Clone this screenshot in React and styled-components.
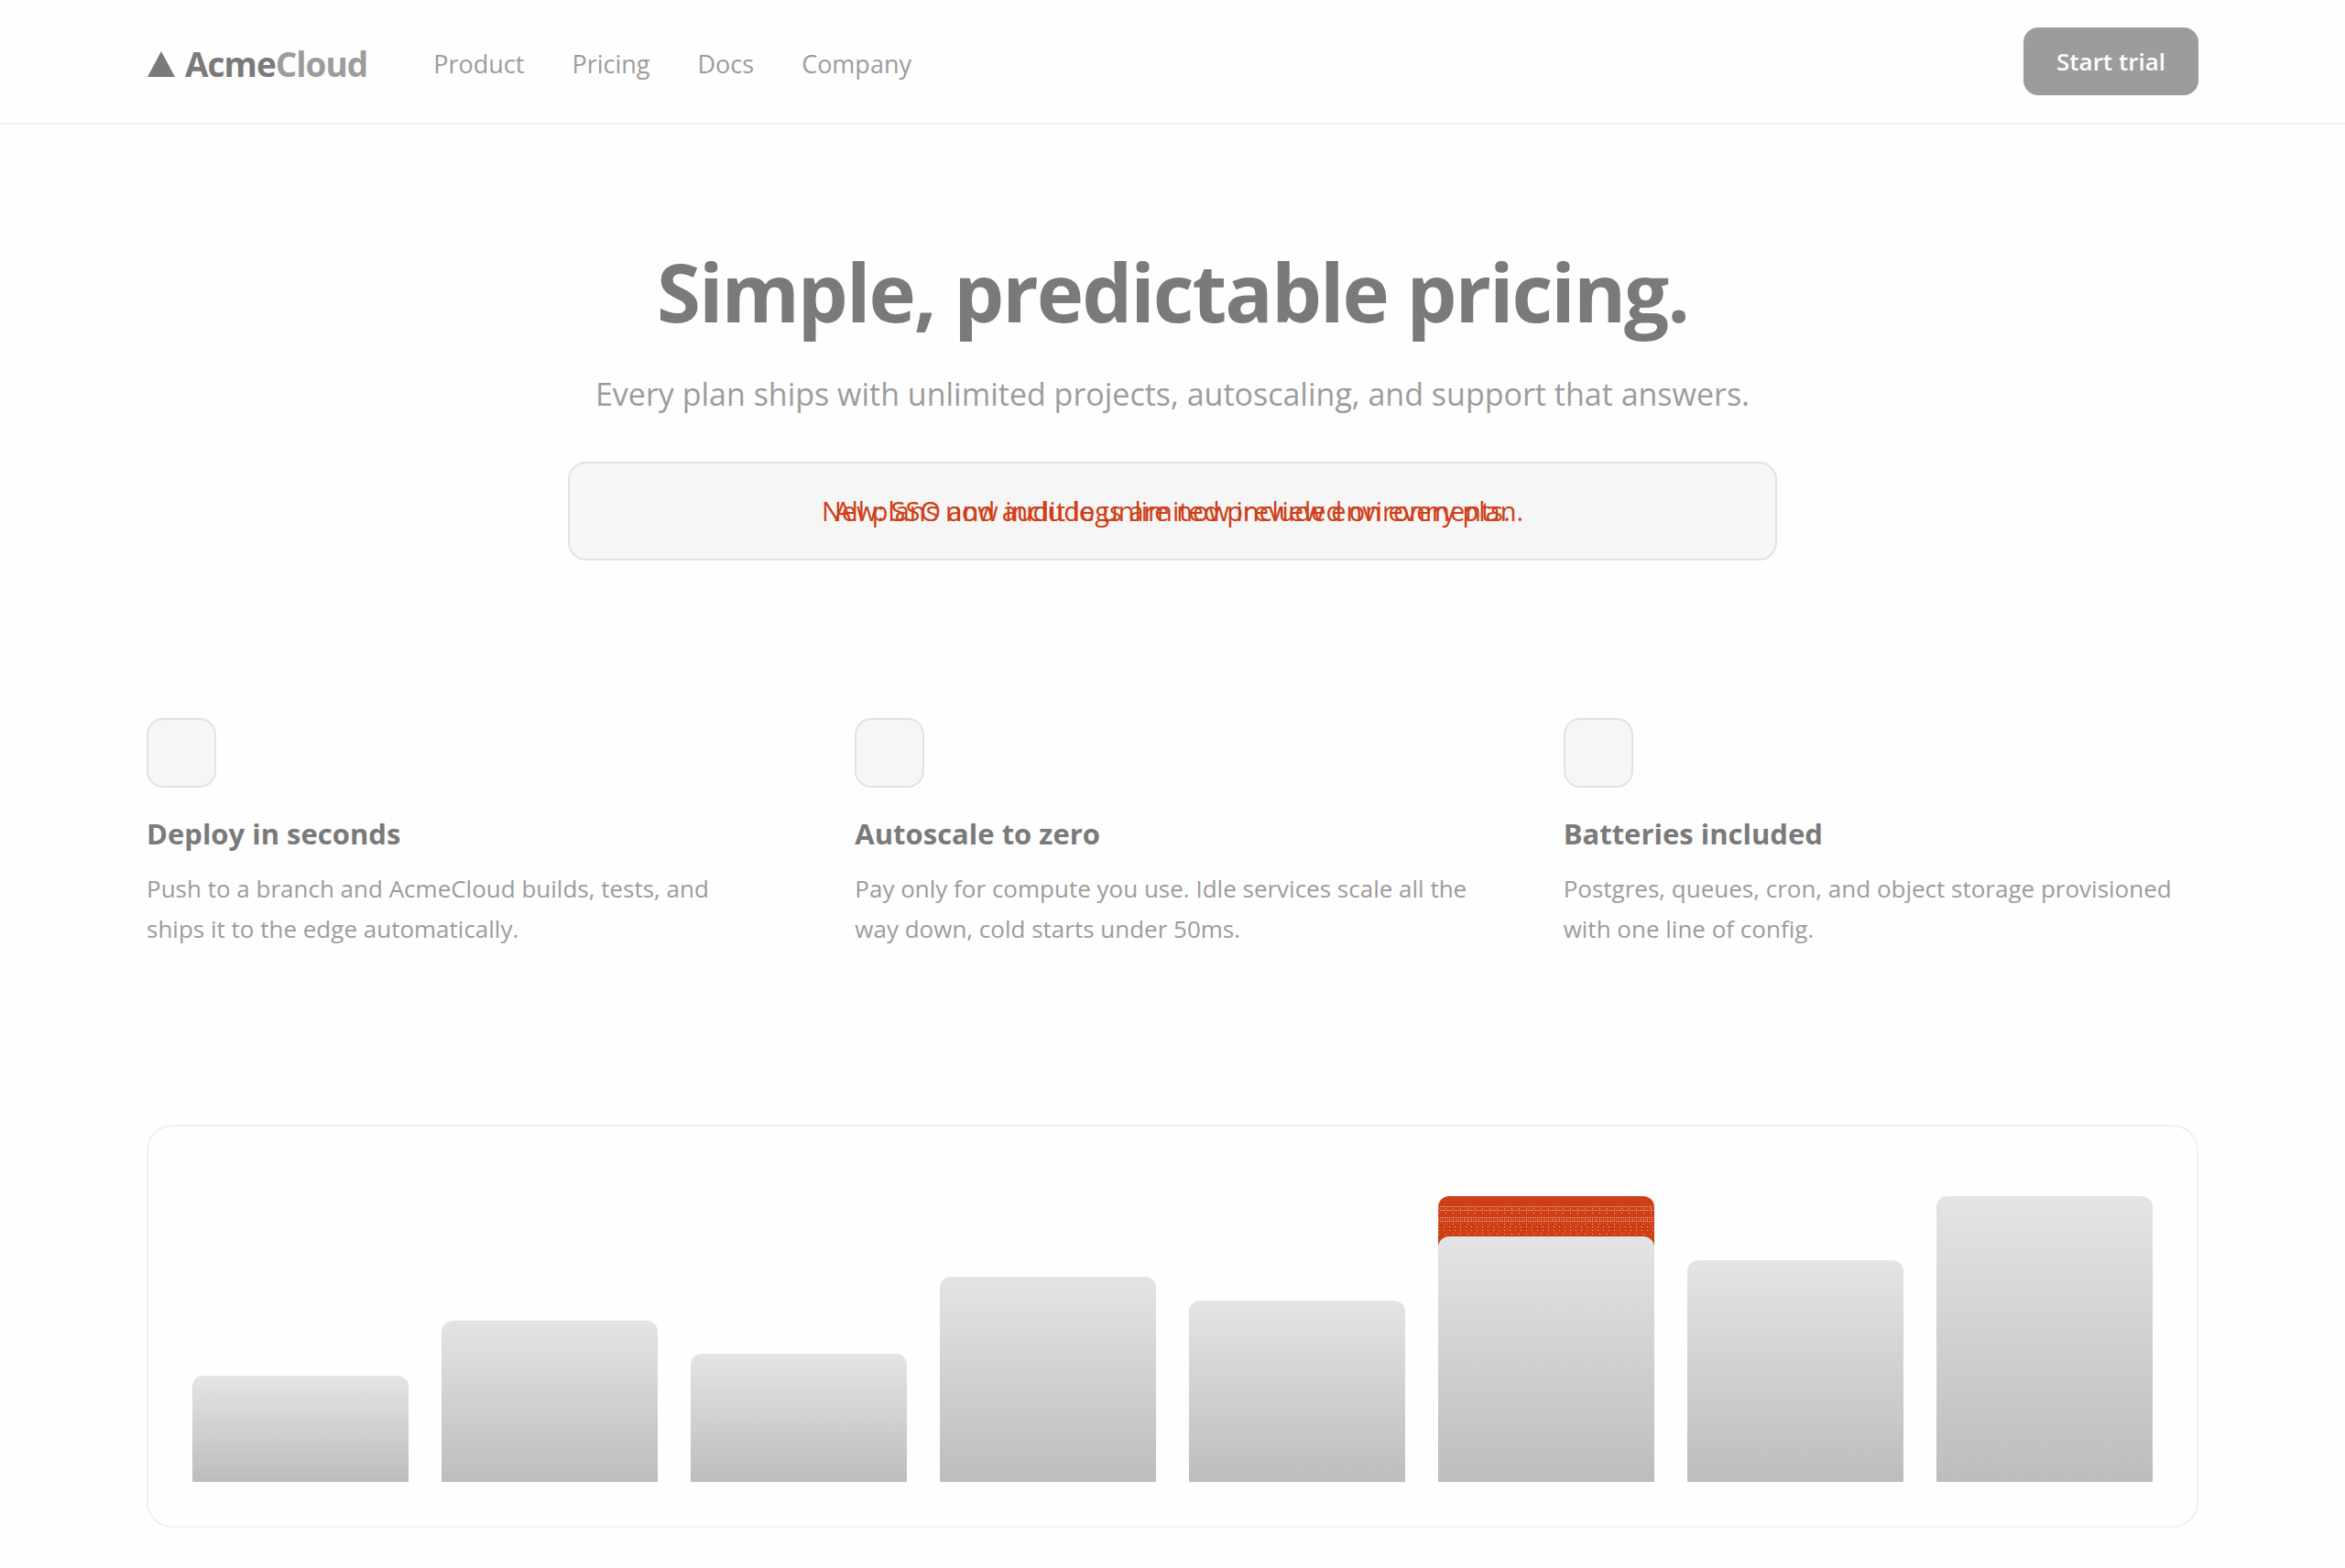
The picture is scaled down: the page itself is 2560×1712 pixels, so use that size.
import React from 'react';
import styled, { createGlobalStyle } from 'styled-components';

const GlobalStyle = createGlobalStyle`
  * {
    box-sizing: border-box;
  }

  body {
    margin: 0;
    background: #fefefe;
    color: #9c9c9c;
    font-family: 'Open Sans', 'Noto Sans', sans-serif;
    font-size: 27px;
  }
`;

const Header = styled.header`
  display: flex;
  align-items: center;
  padding: 30px 160px;
  border-bottom: 2px solid #f0f0f0;
`;

const Brand = styled.a`
  display: flex;
  align-items: center;
  gap: 10px;
  margin-right: 72px;
  padding-top: 6px;
  color: #7a7a7a;
  font-size: 37px;
  font-weight: 700;
  line-height: 48px;
  letter-spacing: -1px;
  text-decoration: none;

  span {
    color: #9c9c9c;
  }
`;

const Nav = styled.nav`
  display: flex;
  flex: 1;
  gap: 52px;
  padding-top: 6px;
`;

const NavLink = styled.a`
  color: #9c9c9c;
  line-height: 40px;
  text-decoration: none;
`;

const TrialButton = styled.button`
  padding: 18px 36px;
  border: 0;
  border-radius: 16px;
  background: #9c9c9c;
  color: #fefefe;
  font: inherit;
  font-size: 26px;
  font-weight: 600;
  line-height: 38px;
`;

const Hero = styled.section`
  padding: 124px 160px 0;
  text-align: center;
`;

const Title = styled.h1`
  margin: 0;
  color: #7a7a7a;
  font-size: 87px;
  font-weight: 700;
  line-height: 116px;
  letter-spacing: -2px;
`;

const Lead = styled.p`
  margin: 26px 0 0;
  font-size: 34px;
  line-height: 56px;
`;

const Banner = styled.div`
  display: grid;
  max-width: 1320px;
  margin: 46px auto 0;
  padding: 32px;
  border: 2px solid #e3e3e3;
  border-radius: 20px;
  background: #f6f6f6;
  color: #cf3f17;
  font-size: 29px;
  font-weight: 500;
  line-height: 40px;
`;

const Message = styled.span`
  grid-area: 1 / 1;
`;

const Features = styled.section`
  display: grid;
  grid-template-columns: repeat(3, 1fr);
  gap: 80px;
  padding: 172px 160px 192px;
`;

const FeatureIcon = styled.div`
  width: 76px;
  height: 76px;
  border: 2px solid #e3e3e3;
  border-radius: 18px;
  background: #f6f6f6;
`;

const FeatureTitle = styled.h3`
  margin: 26px 0 14px;
  color: #7a7a7a;
  font-size: 31px;
  font-weight: 700;
  line-height: 48px;
`;

const FeatureText = styled.p`
  margin: 0;
  padding-right: 16px;
  font-size: 26px;
  line-height: 44px;
`;

const Chart = styled.section`
  display: flex;
  align-items: flex-end;
  gap: 36px;
  height: 440px;
  margin: 0 160px 44px;
  padding: 48px;
  border: 2px solid #f0f0f0;
  border-radius: 28px;
`;

// [top, pitch] of each dotted line across the growth cap
const dotRows = [
  [11, 2],
  [13, 8],
  [15, 2],
  [18, 8],
  [23, 2],
  [25, 4],
  [27, 2],
  [30, 8],
  [33, 6],
  [37, 6],
  [41, 8],
];

const dots = dotRows
  .map(
    ([top, pitch]) =>
      `linear-gradient(90deg, #f2b09c 1px, transparent 1px) 0 ${top}px / ${pitch}px 1px repeat-x`,
  )
  .join(', ');

const Column = styled.div`
  flex: 1;
  border-radius: 12px 12px 0 0;
  background: ${({ $grown }) => ($grown ? `${dots}, #cf3f17` : 'none')};
`;

const Bar = styled.div`
  border-radius: 12px 12px 0 0;
  background: linear-gradient(#e4e4e4, #bdbdbd);
`;

const links = ['Product', 'Pricing', 'Docs', 'Company'];

const messages = [
  'New: SSO and audit logs are now included on every plan.',
  'All plans now include unlimited preview environments.',
];

const features = [
  {
    title: 'Deploy in seconds',
    text: 'Push to a branch and AcmeCloud builds, tests, and ships it to the edge automatically.',
  },
  {
    title: 'Autoscale to zero',
    text: 'Pay only for compute you use. Idle services scale all the way down, cold starts under 50ms.',
  },
  {
    title: 'Batteries included',
    text: 'Postgres, queues, cron, and object storage provisioned with one line of config.',
  },
];

const bars = [
  { height: 116 },
  { height: 176 },
  { height: 140 },
  { height: 224 },
  { height: 198 },
  { height: 268, growth: 44 },
  { height: 242 },
  { height: 312 },
];

const App = () => (
  <>
    <GlobalStyle />
    <Header>
      <Brand href="#">
        <svg width="32" height="28" viewBox="0 0 32 28" aria-hidden="true">
          <path d="M16 0 31 28H1z" fill="currentColor" />
        </svg>
        <div>
          Acme<span>Cloud</span>
        </div>
      </Brand>
      <Nav>
        {links.map((link) => (
          <NavLink key={link} href="#">
            {link}
          </NavLink>
        ))}
      </Nav>
      <TrialButton>Start trial</TrialButton>
    </Header>
    <Hero>
      <Title>Simple, predictable pricing.</Title>
      <Lead>
        Every plan ships with unlimited projects, autoscaling, and support that
        answers.
      </Lead>
      <Banner>
        {messages.map((message) => (
          <Message key={message}>{message}</Message>
        ))}
      </Banner>
    </Hero>
    <Features>
      {features.map(({ title, text }) => (
        <article key={title}>
          <FeatureIcon />
          <FeatureTitle>{title}</FeatureTitle>
          <FeatureText>{text}</FeatureText>
        </article>
      ))}
    </Features>
    <Chart>
      {bars.map(({ height, growth = 0 }, index) => (
        <Column key={index} $grown={growth > 0} style={{ paddingTop: growth }}>
          <Bar style={{ height }} />
        </Column>
      ))}
    </Chart>
  </>
);

export default App;
